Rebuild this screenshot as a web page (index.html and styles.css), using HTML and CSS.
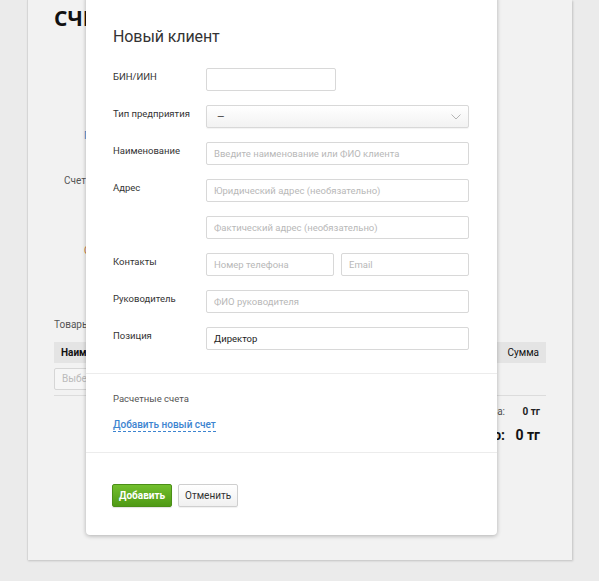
FILE: index.html
```html
<!DOCTYPE html>
<html lang="ru">
<head>
<meta charset="utf-8">
<title>Счет на оплату</title>
<link rel="stylesheet" href="styles.css">
</head>
<body>
<div class="page">
  <div class="sheet">
    <div class="doc-head">
      <h1 class="doc-title">СЧЕТ</h1>
      <div class="doc-row doc-row-link"><a class="doc-link">Поиск</a></div>
      <div class="doc-row doc-row-label">Счет на</div>
      <div class="doc-row doc-row-warn"><span class="doc-warn">Срок</span></div>
    </div>

    <div class="goods-caption">Товары</div>
    <div class="goods-head">
      <span class="goods-name">Наименование</span>
      <span class="goods-sum">Сумма</span>
    </div>
    <div class="goods-pick"><span class="goods-input">Выберите товар</span></div>
    <div class="goods-totals">
      <span class="total-label">Сумма:</span><span class="total-value">0 тг</span>
      <span class="total-label total-big">Итого:</span><span class="total-value total-big">0 тг</span>
    </div>
  </div>

  <div class="modal">
    <h2 class="modal-title">Новый клиент</h2>
    <div class="form">
      <label class="label">БИН/ИИН</label>
      <div class="field"><span class="input input-short"></span></div>

      <label class="label">Тип предприятия</label>
      <div class="field">
        <span class="input select">—
          <svg class="chevron" width="10" height="6" viewBox="0 0 10 6"><path d="M0.5 0.5 L5 5 L9.5 0.5" fill="none" stroke="#b5b5b5" stroke-width="1"/></svg>
        </span>
      </div>

      <label class="label">Наименование</label>
      <div class="field"><span class="input placeholder">Введите наименование или ФИО клиента</span></div>

      <label class="label">Адрес</label>
      <div class="field"><span class="input placeholder">Юридический адрес (необязательно)</span></div>

      <span class="label"></span>
      <div class="field"><span class="input placeholder">Фактический адрес (необязательно)</span></div>

      <label class="label">Контакты</label>
      <div class="field field-pair">
        <span class="input placeholder">Номер телефона</span>
        <span class="input placeholder">Email</span>
      </div>

      <label class="label">Руководитель</label>
      <div class="field"><span class="input placeholder">ФИО руководителя</span></div>

      <label class="label">Позиция</label>
      <div class="field"><span class="input">Директор</span></div>
    </div>

    <div class="accounts">
      <div class="accounts-caption">Расчетные счета</div>
      <a class="dashed-link">Добавить новый счет</a>
    </div>

    <div class="actions">
      <button class="btn btn-primary">Добавить</button>
      <button class="btn btn-default">Отменить</button>
    </div>
  </div>
</div>
</body>
</html>
```

FILE: styles.css
```css
html, body {
  margin: 0;
  padding: 0;
}

body {
  background: #ebebeb;
  font-family: Roboto, "Open Sans", "Liberation Sans", sans-serif;
  color: #333;
  overflow: hidden;
}

.page {
  position: relative;
  width: 599px;
  height: 581px;
}

/* document sheet behind the dialog */
.sheet {
  margin-left: 27px;
  width: 545px;
  height: 560px;
  background: #f2f2f2;
  border-left: 1px solid #d6d6d6;
  box-shadow: 1px 1px 2px rgba(0, 0, 0, 0.18);
  box-sizing: border-box;
  padding: 0 26px 0 26px;
  overflow: hidden;
}

.doc-title {
  margin: 0;
  padding-top: 5px;
  font-family: "Open Sans", sans-serif;
  font-size: 21px;
  font-weight: 700;
  color: #111;
  line-height: 26px;
  white-space: nowrap;
}

.doc-row {
  font-size: 10px;
  line-height: 14px;
  white-space: nowrap;
}

.doc-row-link {
  margin-top: 98px;
  padding-left: 30px;
}

.doc-link {
  color: #4a86c8;
}

.doc-row-label {
  margin-top: 31px;
  padding-left: 10px;
  color: #555;
}

.doc-row-warn {
  margin-top: 56px;
  padding-left: 30px;
}

.doc-warn {
  color: #c77b3a;
}

.goods-caption {
  margin-top: 60px;
  font-size: 10px;
  line-height: 14px;
  color: #555;
}

.goods-head {
  margin-top: 10px;
  height: 21px;
  background: #e4e4e4;
  display: flex;
  justify-content: space-between;
  align-items: center;
  padding: 0 7px;
  font-size: 10px;
  font-weight: 700;
  color: #111;
}

.goods-sum {
  font-weight: 400;
}

.goods-pick {
  margin-top: 5px;
  padding-bottom: 5px;
  border-bottom: 1px solid #dcdcdc;
}

.goods-input {
  display: block;
  width: 180px;
  height: 22px;
  box-sizing: border-box;
  border: 1px solid #d6d6d6;
  border-radius: 2px;
  background: #f6f6f6;
  padding: 4px 7px;
  font-size: 10px;
  color: #bbb;
}

.goods-totals {
  margin-top: 10px;
  display: grid;
  grid-template-columns: 1fr 35px;
  row-gap: 10px;
  align-items: baseline;
  padding-right: 6px;
  font-size: 10px;
  color: #222;
}

.total-label {
  text-align: right;
  color: #555;
}

.total-value {
  text-align: right;
  font-weight: 700;
}

.total-big {
  font-size: 14px;
  font-weight: 700;
  color: #111;
}

/* dialog */
.modal {
  position: absolute;
  left: 86px;
  top: -6px;
  width: 411px;
  height: 541px;
  box-sizing: border-box;
  background: #fff;
  border-radius: 4px;
  box-shadow: 0 1px 4px rgba(0, 0, 0, 0.28);
  padding-top: 32px;
}

.modal-title {
  margin: 0 0 0 27px;
  font-size: 16px;
  font-weight: 400;
  letter-spacing: -0.1px;
  line-height: 22px;
  color: #333;
}

.form {
  margin-top: 20px;
  padding: 0 28px 0 27px;
  display: grid;
  grid-template-columns: 93px 1fr;
  row-gap: 14px;
}

.label {
  font-size: 9.5px;
  line-height: 14px;
  padding-top: 2px;
  color: #333;
}

.field {
  display: flex;
}

.field-pair {
  gap: 7px;
}

.field-pair .input {
  flex: 1;
}

.input {
  display: flex;
  align-items: center;
  width: 100%;
  height: 23px;
  box-sizing: border-box;
  border: 1px solid #d8d8d8;
  border-radius: 2px;
  background: #fff;
  padding: 0 7px;
  font-size: 9.5px;
  color: #222;
  white-space: nowrap;
  overflow: hidden;
}

.input-short {
  width: 130px;
}

.placeholder {
  color: #b8b8b8;
}

.select {
  position: relative;
  padding-left: 10px;
  background: linear-gradient(#ffffff, #f2f2f2);
  box-shadow: 0 1px 1px rgba(0, 0, 0, 0.05);
}

.chevron {
  position: absolute;
  right: 7px;
  top: 8px;
}

.accounts {
  margin-top: 23px;
  border-top: 1px solid #ececec;
  border-bottom: 1px solid #ececec;
  padding: 18px 27px 20px;
}

.accounts-caption {
  font-size: 9.5px;
  line-height: 14px;
  color: #555;
}

.dashed-link {
  display: inline-block;
  margin-top: 12px;
  font-size: 10px;
  font-weight: 500;
  line-height: 13px;
  color: #3d84d0;
  border-bottom: 1px dashed #3d84d0;
}

.actions {
  padding: 31px 26px 0;
  display: flex;
  gap: 6px;
}

.btn {
  height: 23px;
  padding: 0 6px;
  border-radius: 2px;
  font-family: Roboto, "Open Sans", sans-serif;
  font-size: 10px;
  cursor: pointer;
}

.btn-primary {
  width: 60px;
  background: linear-gradient(#72bf2e, #4f9a15);
  border: 1px solid #4b8f17;
  color: #fff;
  font-weight: 700;
  box-shadow: 0 1px 1px rgba(0, 0, 0, 0.12);
}

.btn-default {
  width: 60px;
  background: linear-gradient(#ffffff, #f0f0f0);
  border: 1px solid #cfcfcf;
  color: #333;
  box-shadow: 0 1px 1px rgba(0, 0, 0, 0.06);
}
```
